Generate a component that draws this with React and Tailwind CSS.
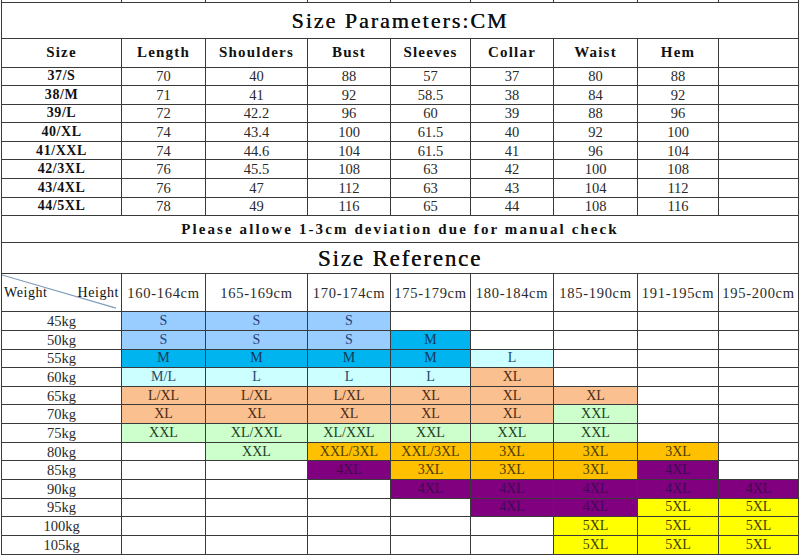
const cols = [120, 84, 102, 83, 80, 83, 84, 81, 80]

const params = [
  ['37/S', '70', '40', '88', '57', '37', '80', '88'],
  ['38/M', '71', '41', '92', '58.5', '38', '84', '92'],
  ['39/L', '72', '42.2', '96', '60', '39', '88', '96'],
  ['40/XL', '74', '43.4', '100', '61.5', '40', '92', '100'],
  ['41/XXL', '74', '44.6', '104', '61.5', '41', '96', '104'],
  ['42/3XL', '76', '45.5', '108', '63', '42', '100', '108'],
  ['43/4XL', '76', '47', '112', '63', '43', '104', '112'],
  ['44/5XL', '78', '49', '116', '65', '44', '108', '116'],
]

const heights = ['160-164cm', '165-169cm', '170-174cm', '175-179cm', '180-184cm', '185-190cm', '191-195cm', '195-200cm']

const tone = {
  s: 'bg-[#99ccff] text-[#27407a]',
  m: 'bg-[#00b4f0] text-[#123a5c]',
  c: 'bg-[#ccffff] text-[#23476b]',
  o: 'bg-[#fac090] text-[#4a2a12]',
  g: 'bg-[#ccffcc] text-[#1e3d1e]',
  y: 'bg-[#ffc000] text-[#4d3b00]',
  p: 'bg-[#800080] text-[#3f0a4f]',
  l: 'bg-[#ffff00] text-[#3d3d00]',
}

// each cell: 'size:tone' or '' for empty
const reference = [
  ['45kg', 'S:s', 'S:s', 'S:s', '', '', '', '', ''],
  ['50kg', 'S:s', 'S:s', 'S:s', 'M:m', '', '', '', ''],
  ['55kg', 'M:m', 'M:m', 'M:m', 'M:m', 'L:c', '', '', ''],
  ['60kg', 'M/L:c', 'L:c', 'L:c', 'L:c', 'XL:o', '', '', ''],
  ['65kg', 'L/XL:o', 'L/XL:o', 'L/XL:o', 'XL:o', 'XL:o', 'XL:o', '', ''],
  ['70kg', 'XL:o', 'XL:o', 'XL:o', 'XL:o', 'XL:o', 'XXL:g', '', ''],
  ['75kg', 'XXL:g', 'XL/XXL:g', 'XL/XXL:g', 'XXL:g', 'XXL:g', 'XXL:g', '', ''],
  ['80kg', '', 'XXL:g', 'XXL/3XL:y', 'XXL/3XL:y', '3XL:y', '3XL:y', '3XL:y', ''],
  ['85kg', '', '', '4XL:p', '3XL:y', '3XL:y', '3XL:y', '4XL:p', ''],
  ['90kg', '', '', '', '4XL:p', '4XL:p', '4XL:p', '4XL:p', '4XL:p'],
  ['95kg', '', '', '', '', '4XL:p', '4XL:p', '5XL:l', '5XL:l'],
  ['100kg', '', '', '', '', '', '5XL:l', '5XL:l', '5XL:l'],
  ['105kg', '', '', '', '', '', '5XL:l', '5XL:l', '5XL:l'],
]

const cell = 'border border-[#3a3a3a] p-0 text-center align-middle'

export default function App() {
  return (
    <div className="w-[800px] h-[556px] bg-white overflow-hidden pl-px font-['Liberation_Serif',serif] text-[#111]">
      <table className="border-collapse table-fixed w-[797px]">
        <colgroup>
          {cols.map((w, i) => (
            <col key={i} style={{ width: w }} />
          ))}
        </colgroup>
        <tbody>
          <tr className="h-[2px]">
            {cols.map((_, i) => (
              <td key={i} className="border-x border-[#3a3a3a] p-0" />
            ))}
          </tr>
          <tr className="h-[36px]">
            <td colSpan={9} className={`${cell} text-[22px] tracking-[0.09em] leading-none pt-[2px] [text-shadow:0.3px_0_0_#111]`}>
              Size Parameters:CM
            </td>
          </tr>
          <tr className="h-[29px]">
            {['Size', 'Length', 'Shoulders', 'Bust', 'Sleeves', 'Collar', 'Waist', 'Hem', ''].map((h, i) => (
              <td key={i} className={`${cell} text-[15px] tracking-[0.08em] font-bold leading-none`}>
                {h}
              </td>
            ))}
          </tr>
          {params.map((row, r) => (
            <tr key={r} className="h-[18.6px]">
              {row.map((v, i) => (
                <td
                  key={i}
                  className={`${cell} leading-[16px] ${i === 0 ? 'text-[14px] font-bold tracking-[0.04em]' : 'text-[14.5px] text-[#2a2a2a]'}`}
                >
                  {v}
                </td>
              ))}
              <td className={cell} />
            </tr>
          ))}
          <tr className="h-[27px]">
            <td colSpan={9} className={`${cell} text-[15px] tracking-[0.14em] font-bold leading-none`}>
              Please allowe 1-3cm deviation due for manual check
            </td>
          </tr>
          <tr className="h-[31px]">
            <td colSpan={9} className={`${cell} text-[23px] tracking-[0.08em] leading-none [text-shadow:0.3px_0_0_#111]`}>
              Size Reference
            </td>
          </tr>
          <tr className="h-[38px]">
            <td className={`${cell} relative`}>
              <svg className="absolute inset-0 w-full h-full" viewBox="0 0 120 38" preserveAspectRatio="none">
                <line x1="0" y1="1" x2="115" y2="35" stroke="#7f9cbc" strokeWidth="1.2" />
              </svg>
              <div className="relative flex justify-between items-center px-[2px] text-[14px] tracking-[0.04em] leading-none">
                <span>Weight</span>
                <span>Height</span>
              </div>
            </td>
            {heights.map((h) => (
              <td key={h} className={`${cell} text-[14.5px] tracking-[0.05em] leading-none text-[#2a2a2a]`}>
                {h}
              </td>
            ))}
          </tr>
          {reference.map(([weight, ...sizes]) => (
            <tr key={weight} className="h-[18.65px]">
              <td className={`${cell} text-[14.5px] leading-[16px] text-[#2a2a2a]`}>{weight}</td>
              {sizes.map((s, i) => {
                const [label, t] = s.split(':')
                return (
                  <td key={i} className={`${cell} text-[14px] leading-[16px] ${t ? tone[t] : ''}`}>
                    {label}
                  </td>
                )
              })}
            </tr>
          ))}
        </tbody>
      </table>
    </div>
  )
}
